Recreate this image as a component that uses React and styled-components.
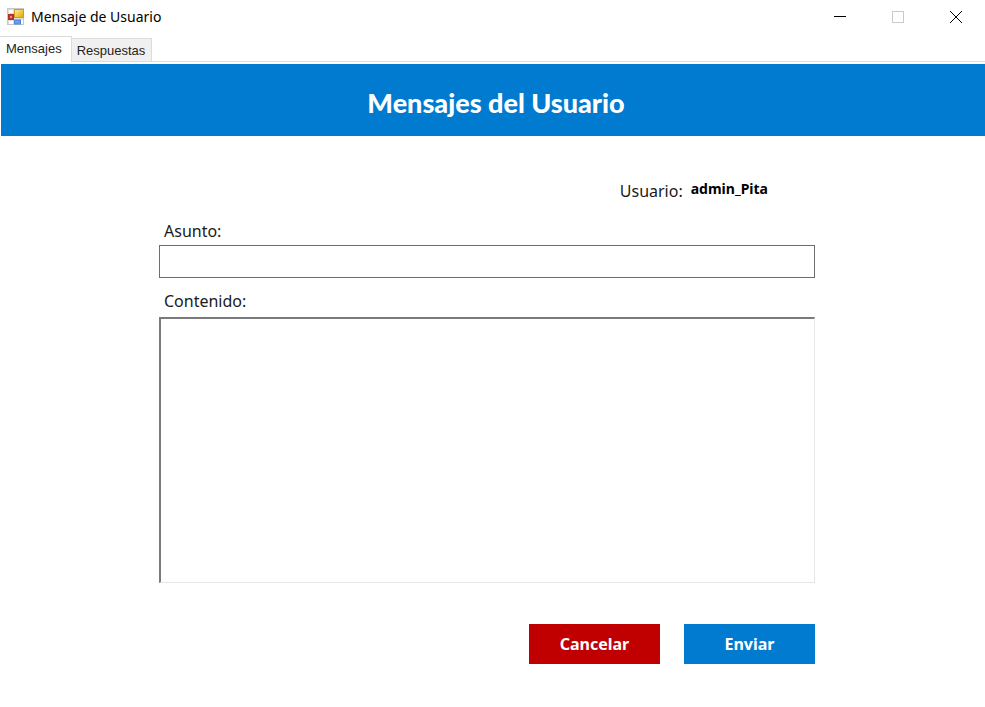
import React, { useState } from "react";
import styled, { createGlobalStyle } from "styled-components";

const GlobalStyle = createGlobalStyle`
  *, *::before, *::after { box-sizing: border-box; }
  body {
    margin: 0;
    background: #fff;
    color: #1a1a1a;
    font-family: "Noto Sans", "Open Sans", sans-serif;
  }
`;

const Window = styled.div`
  display: flex;
  flex-direction: column;
  min-height: 100vh;
`;

const TitleBar = styled.header`
  display: flex;
  align-items: center;
  gap: 6px;
  height: 34px;
  padding-left: 7px;
`;

const WindowTitle = styled.span`
  flex: 1;
  font-size: 14px;
  line-height: 20px;
  color: #000;
`;

const WindowControls = styled.div`
  display: flex;
`;

const WindowButton = styled.button`
  display: grid;
  place-items: center;
  width: 58px;
  height: 34px;
  padding: 0;
  border: 0;
  background: transparent;
  color: ${(p) => (p.disabled ? "#cacaca" : "#000")};
`;

const TabList = styled.div`
  display: flex;
  align-items: flex-end;
  height: 28px;
  margin-bottom: 2px;
  border-bottom: 1px solid #dcdcdc;
`;

const Tab = styled.button`
  height: ${(p) => (p.$active ? 26 : 23)}px;
  margin-bottom: ${(p) => (p.$active ? -1 : 0)}px;
  padding: ${(p) => (p.$active ? "0 9px 2px 6px" : "2px 6px 0 5px")};
  border: 1px solid #dcdcdc;
  border-bottom: 0;
  border-left-width: 0;
  background: ${(p) => (p.$active ? "#fff" : "#f0f0f0")};
  color: #222;
  font-family: "Liberation Sans", Arial, sans-serif;
  font-size: 13px;
  line-height: 20px;
`;

const Banner = styled.div`
  display: flex;
  align-items: center;
  justify-content: center;
  height: 72px;
  margin-left: 1px;
  padding: 6px 0 0 6px;
  background: #007bd0;
`;

const Heading = styled.h1`
  margin: 0;
  color: #fff;
  font-family: Lato, sans-serif;
  font-size: 27px;
  font-weight: 900;
  line-height: 32px;
`;

const Form = styled.form`
  display: flex;
  flex: 1;
  flex-direction: column;
  padding: 43px 170px 43px 159px;
`;

const UserLine = styled.div`
  display: flex;
  justify-content: flex-end;
  gap: 8px;
  margin: 0 47px 16px 0;
  font-size: 16px;
  line-height: 24px;
`;

const UserName = styled.strong`
  font-size: 14px;
  line-height: 20px;
  color: #000;
`;

const Label = styled.label`
  padding-left: 5px;
  font-size: 16px;
  line-height: 24px;
`;

const SubjectInput = styled.input`
  width: 100%;
  height: 33px;
  margin: 2px 0 11px;
  padding: 4px 6px;
  border: 1px solid #6e6e6e;
  background: #fff;
  font: inherit;
`;

const ContentInput = styled.textarea`
  flex: 1;
  min-height: 120px;
  margin-top: 4px;
  padding: 4px 6px;
  border: 1px solid #e6e6e6;
  border-top: 2px solid #7a7a7a;
  border-left: 2px solid #7a7a7a;
  background: #fff;
  font: inherit;
  resize: none;
`;

const Actions = styled.div`
  display: flex;
  justify-content: flex-end;
  gap: 24px;
  margin-top: 41px;
`;

const ActionButton = styled.button`
  width: 131px;
  height: 40px;
  padding: 0;
  border: 0;
  background: ${(p) => (p.$danger ? "#c00000" : "#007bd0")};
  color: #fff;
  font-family: inherit;
  font-size: 16px;
  font-weight: 700;
  line-height: 24px;
`;

function AppIcon() {
  return (
    <svg width="18" height="18" viewBox="0 0 18 18" aria-hidden="true">
      <defs>
        <linearGradient id="gold" x1="0" y1="0" x2="1" y2="1">
          <stop offset="0" stopColor="#ffee9c" />
          <stop offset="1" stopColor="#e3a600" />
        </linearGradient>
      </defs>
      <rect x="0.5" y="0.5" width="16" height="16" fill="#dedede" stroke="#c8c8c8" />
      <path d="M2 2h4v3H2zM2 13h4v3H2zM14 12h2v4h-2z" fill="#fff" />
      <rect x="1.5" y="6.5" width="5" height="5" fill="#c9302c" stroke="#b0302a" />
      <rect x="3" y="8" width="2" height="2" fill="#ef8d84" />
      <rect x="7.5" y="1.5" width="9" height="8" fill="url(#gold)" stroke="#cf9c1c" />
      <rect x="7.5" y="12" width="6" height="4" fill="#6b9fee" stroke="#4a82dc" />
    </svg>
  );
}

export default function App() {
  const [tab, setTab] = useState("Mensajes");
  return (
    <Window>
      <GlobalStyle />
      <TitleBar>
        <AppIcon />
        <WindowTitle>Mensaje de Usuario</WindowTitle>
        <WindowControls>
          <WindowButton type="button" aria-label="Minimizar">
            <svg width="12" height="12" viewBox="0 0 12 12" stroke="currentColor">
              <path d="M0 5.5h12" />
            </svg>
          </WindowButton>
          <WindowButton type="button" aria-label="Maximizar" disabled>
            <svg width="12" height="12" viewBox="0 0 12 12" fill="none" stroke="currentColor">
              <rect x="0.5" y="0.5" width="11" height="11" />
            </svg>
          </WindowButton>
          <WindowButton type="button" aria-label="Cerrar">
            <svg width="12" height="12" viewBox="0 0 12 12" stroke="currentColor">
              <path d="M0 0l12 12M12 0L0 12" />
            </svg>
          </WindowButton>
        </WindowControls>
      </TitleBar>
      <TabList role="tablist">
        {["Mensajes", "Respuestas"].map((name) => (
          <Tab
            key={name}
            type="button"
            role="tab"
            aria-selected={tab === name}
            $active={tab === name}
            onClick={() => setTab(name)}
          >
            {name}
          </Tab>
        ))}
      </TabList>
      <Banner>
        <Heading>Mensajes del Usuario</Heading>
      </Banner>
      <Form onSubmit={(e) => e.preventDefault()}>
        <UserLine>
          <span>Usuario:</span>
          <UserName>admin_Pita</UserName>
        </UserLine>
        <Label htmlFor="asunto">Asunto:</Label>
        <SubjectInput id="asunto" type="text" />
        <Label htmlFor="contenido">Contenido:</Label>
        <ContentInput id="contenido" />
        <Actions>
          <ActionButton type="button" $danger>Cancelar</ActionButton>
          <ActionButton type="submit">Enviar</ActionButton>
        </Actions>
      </Form>
    </Window>
  );
}
